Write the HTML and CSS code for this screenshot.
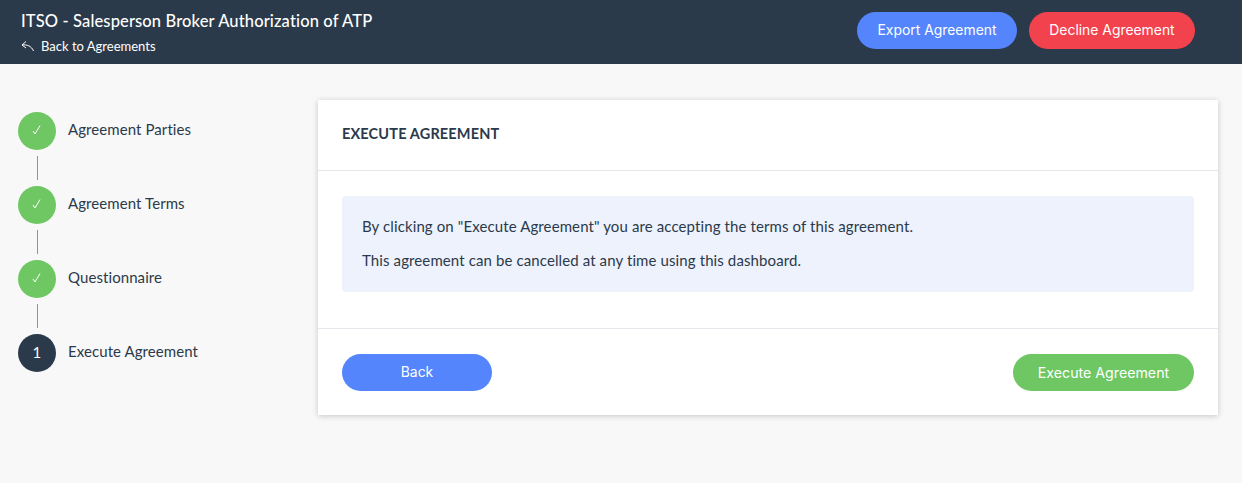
FILE: index.html
```html
<!DOCTYPE html>
<html lang="en">

<head>
  <meta charset="UTF-8">
  <meta name="viewport" content="width=device-width, initial-scale=1.0">
  <title>Execute Agreement</title>
  <link rel="stylesheet" href="styles.css">
</head>

<body>
  <header class="top-bar">
    <div class="top-info">
      <h1 class="top-title">ITSO - Salesperson Broker Authorization of ATP</h1>
      <a class="back-link" href="javascript:;">
        <svg class="back-icon" width="14" height="12" viewBox="0 0 14 12" fill="none" stroke="#fff" stroke-width="1">
          <path d="M5 1.500 1 5l4 3" />
          <path d="M1 5c5-.6 9.500 1 11.500 6" />
        </svg>
        Back to Agreements
      </a>
    </div>
    <div class="top-actions">
      <a class="btn btn-export" href="javascript:;">Export Agreement</a>
      <a class="btn btn-decline" href="javascript:;">Decline Agreement</a>
    </div>
  </header>

  <main class="page">
    <ol class="steps">
      <li class="step">
        <span class="step-dot done">
          <svg class="check" width="9" height="10" viewBox="0 0 9 10" fill="none" stroke="#fff" stroke-width="1"><path d="M1 6l2 3 5-8.500" /></svg>
        </span>
        <span class="step-name">Agreement Parties</span>
      </li>
      <li class="step-line"></li>
      <li class="step">
        <span class="step-dot done">
          <svg class="check" width="9" height="10" viewBox="0 0 9 10" fill="none" stroke="#fff" stroke-width="1"><path d="M1 6l2 3 5-8.500" /></svg>
        </span>
        <span class="step-name">Agreement Terms</span>
      </li>
      <li class="step-line"></li>
      <li class="step">
        <span class="step-dot done">
          <svg class="check" width="9" height="10" viewBox="0 0 9 10" fill="none" stroke="#fff" stroke-width="1"><path d="M1 6l2 3 5-8.500" /></svg>
        </span>
        <span class="step-name">Questionnaire</span>
      </li>
      <li class="step-line"></li>
      <li class="step">
        <span class="step-dot current">1</span>
        <span class="step-name">Execute Agreement</span>
      </li>
    </ol>

    <section class="card">
      <h2 class="card-title">EXECUTE AGREEMENT</h2>
      <div class="card-body">
        <div class="notice">
          <p>By clicking on "Execute Agreement" you are accepting the terms of this agreement.</p>
          <p>This agreement can be cancelled at any time using this dashboard.</p>
        </div>
      </div>
      <div class="card-footer">
        <a class="btn btn-back" href="javascript:;">Back</a>
        <a class="btn btn-execute" href="javascript:;">Execute Agreement</a>
      </div>
    </section>
  </main>
</body>

</html>
```

FILE: styles.css
```css
ul,
li,
ol,
div,
p,
span,
h1,
h2,
a {
  padding: 0px;
  margin: 0px;
}

a {
  text-decoration: none;
  color: #fff;
}

body {
  margin: 0;
  height: 483px;
  overflow: hidden;
  background: #f8f8f8;
  color: #2b3a4a;
  font-family: "Lato", "Liberation Sans", sans-serif;
}

.top-bar {
  display: flex;
  justify-content: space-between;
  height: 64px;
  padding: 0 47px 0 21px;
  background: #2b3a4a;
  color: #fff;
}

.top-title {
  margin-top: 10px;
  height: 22px;
  line-height: 22px;
  font-size: 16.500px;
  font-weight: 500;
  letter-spacing: .13px;
}

.back-link {
  display: flex;
  align-items: center;
  gap: 6px;
  margin-top: 4px;
  height: 20px;
  font-size: 13px;
}

.top-actions {
  display: flex;
  gap: 12px;
  padding-top: 12px;
}

.btn {
  display: block;
  height: 37px;
  line-height: 37px;
  border-radius: 19px;
  text-align: center;
  font-family: "Inter", "Liberation Sans", sans-serif;
  font-size: 13.900px;
  color: #fff;
}

.btn-export {
  width: 160px;
  background: #5485fc;
}

.btn-decline {
  width: 166px;
  background: #f2424d;
}

.btn-back {
  width: 150px;
  background: #5485fc;
}

.btn-execute {
  width: 181px;
  font-size: 14.200px;
  background: #6ec762;
}

.page {
  display: flex;
  align-items: flex-start;
  padding: 36px 24px 0 18px;
}

.steps {
  width: 300px;
  padding-top: 12px;
  list-style: none;
}

.step {
  display: flex;
  align-items: center;
  gap: 12px;
  height: 38px;
  font-size: 15px;
  letter-spacing: .08px;
}

.step-name {
  margin-top: -4px;
}

.step-dot {
  display: flex;
  align-items: center;
  justify-content: center;
  width: 38px;
  height: 38px;
  padding-bottom: 2px;
  box-sizing: border-box;
  border-radius: 50%;
  font-size: 15px;
  color: #fff;
}

.step-dot.done {
  background: #6ec762;
}

.step-dot.current {
  background: #2b3a4a;
}

.check {
  margin-right: 2px;
}

.step-line {
  width: 1px;
  height: 24px;
  margin: 6px 0 6px 19px;
  background: #8a949e;
}

.card {
  width: 900px;
  height: 315px;
  background: #fff;
  box-shadow: 0 1px 6px rgba(0, 0, 0, .2);
}

.card-title {
  height: 70px;
  padding: 0 24px;
  line-height: 67px;
  font-size: 14.500px;
  font-weight: 700;
  letter-spacing: .15px;
  border-bottom: 1px solid #e4e7ec;
}

.card-body {
  height: 158px;
  padding: 25px 24px 0;
  border-bottom: 1px solid #e4e7ec;
  box-sizing: border-box;
}

.notice {
  height: 96px;
  padding: 20px 20px 0;
  box-sizing: border-box;
  border-radius: 4px;
  background: #eef2fd;
  font-size: 15px;
  letter-spacing: .11px;
}

.notice p {
  height: 20px;
  line-height: 20px;
  margin-bottom: 14px;
}

.card-footer {
  display: flex;
  justify-content: space-between;
  padding: 25px 24px 0;
}
```
